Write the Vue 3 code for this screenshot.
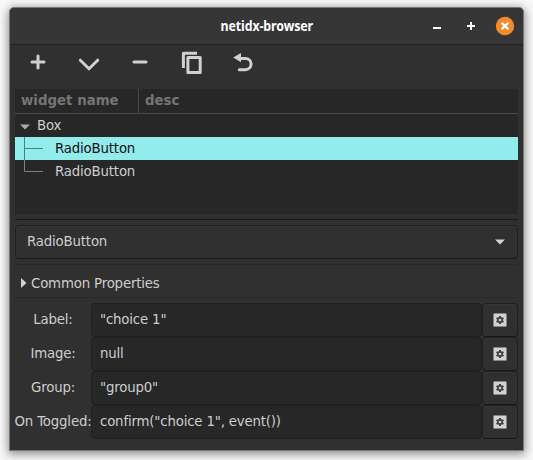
<script setup>
const treeRows = [
  { name: 'RadioButton', selected: true, last: false },
  { name: 'RadioButton', selected: false, last: true },
]
const fields = [
  { label: 'Label:', value: '"choice 1"' },
  { label: 'Image:', value: 'null' },
  { label: 'Group:', value: '"group0"' },
  { label: 'On Toggled:', value: 'confirm("choice 1", event())' },
]
</script>

<template>
  <div class="desktop">
    <main class="window">
      <header class="titlebar">
        <h1 class="title">netidx-browser</h1>
        <div class="controls">
          <svg width="18" height="18" viewBox="0 0 18 18"><path d="M5 11h8" stroke="#fff" stroke-width="2" /></svg>
          <svg width="18" height="18" viewBox="0 0 18 18"><path d="M5 9h8M9 5v8" stroke="#fff" stroke-width="2" /></svg>
          <svg width="18" height="18" viewBox="0 0 18 18">
            <circle cx="9" cy="9" r="9.2" fill="#f38b2a" />
            <path d="M5.7 5.7l6.6 6.6M12.3 5.7l-6.6 6.6" stroke="#fff" stroke-width="2.3" />
          </svg>
        </div>
      </header>

      <nav class="toolbar">
        <svg width="24" height="24" viewBox="0 0 24 24"><path d="M6 12h12M12 6v12" stroke-linecap="round" /></svg>
        <svg width="24" height="24" viewBox="0 0 24 24"><path d="M3.3 10.2l8.7 8.500 8.700-8.500" stroke-linecap="round" /></svg>
        <svg width="24" height="24" viewBox="0 0 24 24"><path d="M6 12h12" stroke-linecap="round" /></svg>
        <svg width="24" height="24" viewBox="0 0 24 24">
          <path d="M4.4 18V3.3H18" stroke-linejoin="round" />
          <rect x="8.9" y="7.4" width="12.3" height="15.2" stroke-linejoin="round" />
        </svg>
        <svg width="24" height="24" viewBox="0 0 24 24">
          <path d="M9 8.5h6.5a5.6 5.6 0 0 1 0 11.2H9.3" stroke-linecap="round" />
          <path d="M3.2 7.6L11 3v9.2z" class="solid" />
        </svg>
      </nav>

      <section class="tree">
        <div class="tree-head">
          <span class="col-name">widget name</span>
          <span class="col-desc">desc</span>
        </div>
        <div class="tree-row root">
          <svg class="expander" width="10" height="6" viewBox="0 0 10 6"><path d="M0 .5h10L5 5.5z" fill="#a9a9a9" /></svg>
          <span>Box</span>
        </div>
        <div v-for="(row, i) in treeRows" :key="i" class="tree-row" :class="{ selected: row.selected }">
          <svg class="branch" width="19" height="23" viewBox="0 0 19 23">
            <path :d="row.last ? 'M.5 0V11.5H19' : 'M.5 0V23M.5 11.5H19'" fill="none" />
          </svg>
          <span>{{ row.name }}</span>
        </div>
      </section>

      <div class="pane-line"></div>

      <div class="combo">
        <span>RadioButton</span>
        <svg width="10" height="6" viewBox="0 0 10 6"><path d="M0 .5h10L5 5.5z" fill="#d2d2d2" /></svg>
      </div>

      <div class="common">
        <svg width="6" height="10" viewBox="0 0 6 10"><path d="M0 0v10l5.500-5z" fill="#d2d2d2" /></svg>
        <span>Common Properties</span>
      </div>

      <section class="fields">
        <div v-for="field in fields" :key="field.label" class="field">
          <label>{{ field.label }}</label>
          <div class="entry">{{ field.value }}</div>
          <div class="gear-button">
            <svg width="14" height="14" viewBox="0 0 14 14">
              <rect x="0" y="0" width="14" height="14" rx="1.6" fill="#858585" />
              <rect x="1" y="1" width="12" height="12" rx=".6" fill="#d3d2d1" />
              <path d="M7 3v8M3.5 5l7 4M10.5 5l-7 4" stroke="#443f3b" stroke-width="2" />
              <circle cx="7" cy="7" r="2.2" fill="#d3d2d1" stroke="#443f3b" stroke-width="1.7" />
            </svg>
          </div>
        </div>
      </section>
    </main>
  </div>
</template>

<style>
body {
  margin: 0;
  background: #fff;
}
</style>

<style scoped>
* {
  box-sizing: border-box;
}
svg {
  display: block;
  flex: none;
}
.desktop {
  width: 533px;
  height: 460px;
  padding: 7px 9px 9px;
  overflow: hidden;
  background: #f8f8f8;
}
.window {
  width: 515px;
  height: 444px;
  border: 1px solid #777;
  border-radius: 5px 5px 0 0;
  background: #303030;
  box-shadow: 0 2px 10px 1px rgba(0, 0, 0, 0.45);
  font: 13.333px/23px "DejaVu Sans", sans-serif;
  letter-spacing: -0.18px;
  color: #cdcdcd;
  white-space: nowrap;
  overflow: hidden;
}
.titlebar {
  display: grid;
  grid-template-columns: 1fr auto 1fr;
  align-items: center;
  height: 37px;
  background: #363636;
  border-bottom: 1px solid #222;
}
.title {
  grid-column: 2;
  margin: 0;
  font: bold 13.6px/20px "Noto Sans", sans-serif;
  letter-spacing: -0.1px;
  transform: scaleX(0.91);
  color: #fff;
}
.controls {
  display: flex;
  justify-content: flex-end;
  gap: 16px;
  padding-right: 9px;
}
.controls svg {
  overflow: visible;
}
.toolbar {
  display: flex;
  gap: 27px;
  height: 44px;
  padding: 5px 16px 0;
}
.toolbar path,
.toolbar rect {
  fill: none;
  stroke: #d0d0d0;
  stroke-width: 3;
}
.toolbar .solid {
  fill: #d0d0d0;
  stroke: none;
}
.tree {
  height: 125px;
  margin: 0 5px;
  background: #272727;
}
.tree-head {
  display: flex;
  height: 25px;
  border-bottom: 1px solid #4b4b4b;
  font-weight: bold;
  letter-spacing: 0.02px;
  color: #757575;
}
.col-name {
  width: 124px;
  padding-left: 6px;
  border-right: 1px solid #4b4b4b;
}
.col-desc {
  padding-left: 6px;
}
.tree-row {
  display: flex;
  height: 23px;
  padding-left: 9px;
  gap: 12px;
}
.root {
  align-items: center;
  padding-left: 5px;
  gap: 7px;
}
.expander {
  margin-top: 2px;
}
.selected {
  background: #93ecec;
  color: #111;
}
.branch {
  stroke: #808080;
}
.selected .branch {
  stroke: #4d7c7c;
}
.pane-line {
  height: 1px;
  margin: 5px 5px 0;
  background: #191919;
}
.combo {
  display: flex;
  align-items: center;
  justify-content: space-between;
  height: 34px;
  margin: 5px 5px 0;
  padding: 0 12px 2px 11px;
  border: 1px solid #202020;
  border-bottom-color: #191919;
  border-radius: 4px;
  background: #303030;
  box-shadow: inset 0 1px #353535;
}
.combo svg {
  margin-top: 2px;
}
.common {
  display: flex;
  align-items: center;
  gap: 4px;
  height: 34px;
  margin: 5px 5px 0;
  padding: 4px 0 0 6px;
  border-top: 1px solid #292929;
  border-bottom: 1px solid #292929;
}
.fields {
  margin: 5px 5px 0;
}
.field {
  display: grid;
  grid-template-columns: 76px 391px 36px;
  height: 34px;
}
.field label {
  justify-self: center;
  line-height: 33px;
}
.entry,
.gear-button {
  border: 1px solid #202020;
  border-radius: 4px;
}
.entry {
  padding-left: 8px;
  line-height: 31px;
  background: #272727;
}
.gear-button {
  display: grid;
  place-items: center;
  border-bottom-color: #191919;
  box-shadow: inset 0 1px #353535;
}
</style>
